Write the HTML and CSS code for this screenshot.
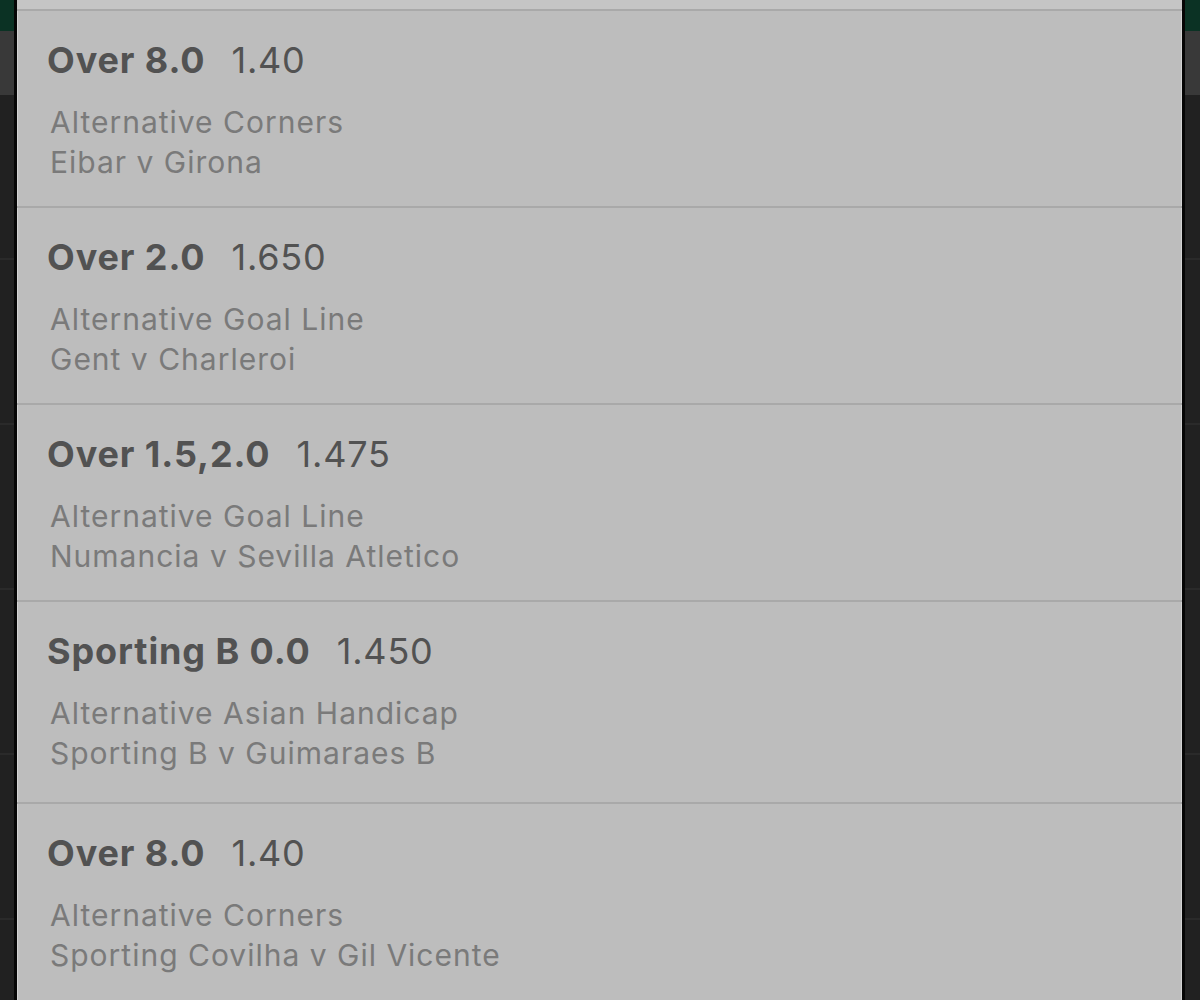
FILE: index.html
```html
<!DOCTYPE html>
<html lang="en">
<head>
    <meta charset="UTF-8">
    <meta name="viewport" content="width=device-width, initial-scale=1.0">
    <title>My Bets</title>
    <link rel="stylesheet" href="styles.css">
</head>
<body>
    <div class="backdrop">
        <div class="topbar"></div>
        <div class="tabs"></div>
        <div class="list-row"></div>
        <div class="list-row"></div>
        <div class="list-row"></div>
        <div class="list-row"></div>
        <div class="list-row"></div>
    </div>

    <div class="sheet">
        <div class="sheet-top"></div>

        <div class="selection">
            <div class="pick"><b>Over 8.0</b><span class="odds">1.40</span></div>
            <div class="market">Alternative Corners</div>
            <div class="market">Eibar v Girona</div>
        </div>

        <div class="selection">
            <div class="pick"><b>Over 2.0</b><span class="odds">1.650</span></div>
            <div class="market">Alternative Goal Line</div>
            <div class="market">Gent v Charleroi</div>
        </div>

        <div class="selection">
            <div class="pick"><b>Over 1.5,2.0</b><span class="odds">1.475</span></div>
            <div class="market">Alternative Goal Line</div>
            <div class="market">Numancia v Sevilla Atletico</div>
        </div>

        <div class="selection tall">
            <div class="pick"><b>Sporting B 0.0</b><span class="odds">1.450</span></div>
            <div class="market">Alternative Asian Handicap</div>
            <div class="market">Sporting B v Guimaraes B</div>
        </div>

        <div class="selection">
            <div class="pick"><b>Over 8.0</b><span class="odds">1.40</span></div>
            <div class="market">Alternative Corners</div>
            <div class="market">Sporting Covilha v Gil Vicente</div>
        </div>
    </div>
</body>
</html>
```

FILE: styles.css
```css
* {
    margin: 0;
    padding: 0;
    box-sizing: border-box;
}

body {
    background-color: #212121;
    font-family: Inter, 'Liberation Sans', Arial, sans-serif;
    height: 1000px;
    overflow: hidden;
    position: relative;
}

/* page behind the sheet */
.topbar {
    height: 31px;
    background: #0b3224;
}

.tabs {
    height: 64px;
    background: #393939;
}

.list-row {
    height: 165px;
    border-bottom: 2px solid #2a2a2a;
}

/* bet selections sheet */
.sheet {
    position: absolute;
    top: 0;
    bottom: 0;
    left: 14px;
    right: 15px;
    background: #bdbdbd;
    border-left: 3px solid #050505;
    border-right: 3px solid #050505;
    box-shadow: inset 1px 0 0 #d2d2d2, inset -1px 0 0 #d2d2d2;
}

.sheet-top {
    height: 9px;
    background: #c5c5c5;
}

.selection {
    height: 197px;
    border-top: 2px solid #a9a9a9;
    padding: 29px 0 0 30px;
}

.selection.tall {
    height: 202px;
}

.pick {
    font-size: 36px;
    line-height: 40px;
    color: #525252;
    letter-spacing: 0.9px;
    margin-bottom: 22px;
}

.pick b {
    font-weight: 700;
}

.odds {
    margin-left: 26px;
    font-weight: 400;
    letter-spacing: 0.8px;
}

.market {
    font-size: 30px;
    line-height: 40px;
    color: #7a7a7a;
    letter-spacing: 1px;
    padding-left: 3px;
}
```
